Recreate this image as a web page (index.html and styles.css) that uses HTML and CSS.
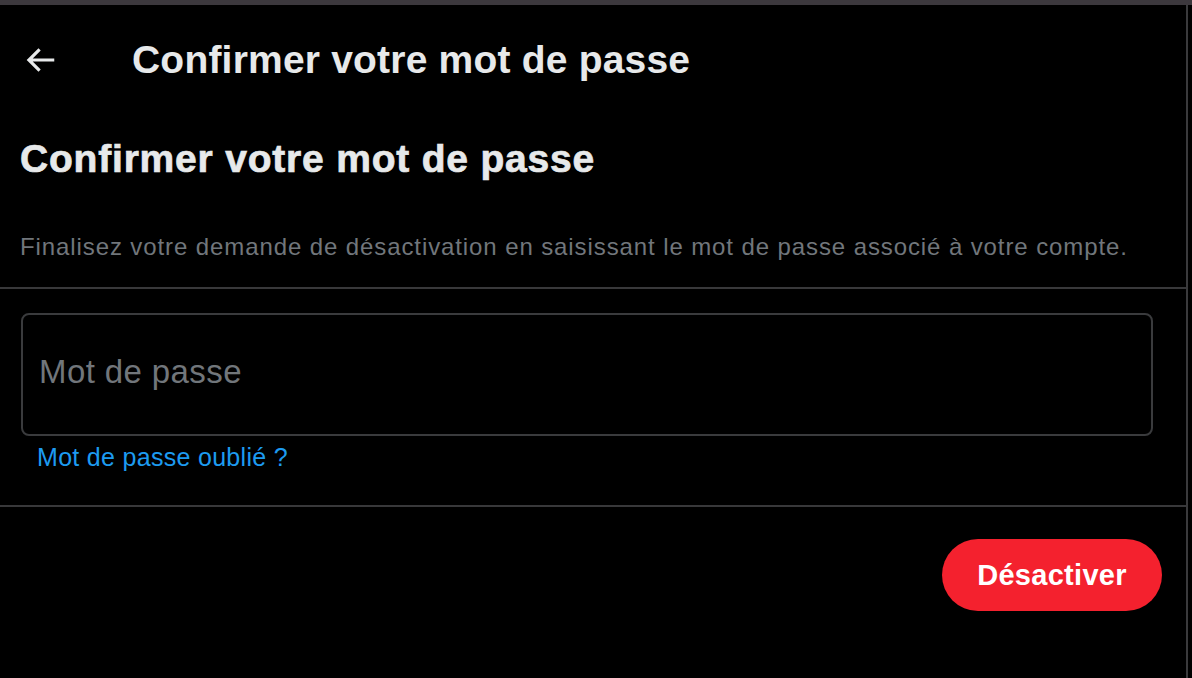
FILE: index.html
```html
<!DOCTYPE html>
<html lang="fr">
<head>
	<meta charset="UTF-8">
	<title>Confirmer votre mot de passe</title>
	<link rel="stylesheet" href="styles.css">
</head>
<body>
	<div class='topbar'></div>
	<div class='panel'>
		<div class='header'>
			<svg class='back' viewBox="0 0 24 24" aria-hidden="true"><path d="M7.414 13l5.043 5.04-1.414 1.42L3.586 12l7.457-7.46 1.414 1.42L7.414 11H21v2H7.414z"></path></svg>
			<h2 class='title'>Confirmer votre mot de passe</h2>
		</div>
		<div class='intro'>
			<h1>Confirmer votre mot de passe</h1>
			<p>Finalisez votre demande de désactivation en saisissant le mot de passe associé à votre compte.</p>
		</div>
		<div class='form'>
			<input class='field' type="password" placeholder="Mot de passe">
			<a class='forgot' href="#">Mot de passe oublié ?</a>
		</div>
		<div class='footer'>
			<div class='btn'>Désactiver</div>
		</div>
	</div>
</body>
</html>
```

FILE: styles.css
```css
*{
	margin: 0;
	padding: 0;
	box-sizing: border-box;
}
body{
	background: #000;
	font-family: "Liberation Sans", Arial, sans-serif;
	color: #e7e9ea;
}
.topbar{
	height: 5px;
	background: #3c383d;
}
.panel{
	width: 1188px;
	height: 673px;
	border-right: 2px solid #3a3a3c;
}
.header{
	height: 110px;
	display: flex;
	align-items: center;
	padding-left: 21px;
}
.back{
	width: 38px;
	height: 38px;
	fill: #e7e9ea;
}
.title{
	margin-left: 73px;
	font-size: 39px;
	font-weight: bold;
	letter-spacing: 0.2px;
	line-height: 48px;
}
.intro{
	padding: 0 20px 25px;
	border-bottom: 2px solid #38383a;
}
.intro h1{
	margin-top: 20px;
	font-size: 39px;
	letter-spacing: 0.8px;
	line-height: 48px;
	font-weight: bold;
	-webkit-text-stroke: 0.7px #e7e9ea;
}
.intro p{
	margin-top: 49px;
	font-size: 24px;
	letter-spacing: 0.9px;
	line-height: 30px;
	color: #71767b;
}
.form{
	padding: 24px 33px 33px 21px;
	border-bottom: 2px solid #38383a;
}
.field{
	display: block;
	width: 100%;
	height: 123px;
	border: 2px solid #3a3b3d;
	border-radius: 8px;
	background: #000;
	padding: 0 0 5px 16px;
	font-family: inherit;
	font-size: 33px;
	letter-spacing: 0.4px;
	color: #e7e9ea;
	outline: none;
}
.field::placeholder{
	color: #71767b;
}
.forgot{
	display: block;
	margin: 6px 0 0 16px;
	font-size: 25px;
	letter-spacing: 0.3px;
	line-height: 30px;
	color: #1d9bf0;
	text-decoration: none;
}
.footer{
	display: flex;
	justify-content: flex-end;
	padding: 32px 24px 0 0;
}
.btn{
	width: 220px;
	height: 72px;
	border-radius: 36px;
	background: #f4212e;
	color: #fff;
	font-size: 29px;
	font-weight: bold;
	letter-spacing: 0.3px;
	line-height: 72px;
	text-align: center;
}
```
